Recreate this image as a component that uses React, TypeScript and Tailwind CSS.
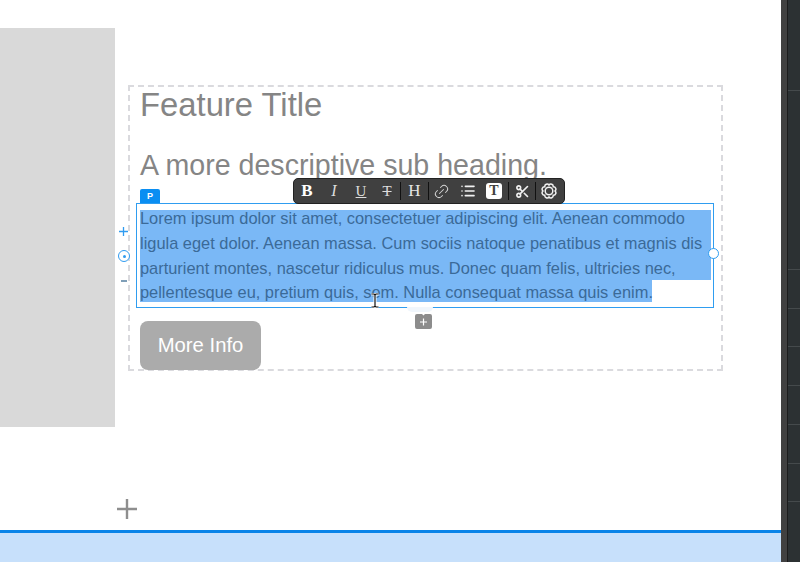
import { Link2, List, Scissors } from 'lucide-react';

const selectedLines = [
  { text: 'Lorem ipsum dolor sit amet, consectetuer adipiscing elit. Aenean commodo', cls: 'h-[21px] w-[571px] leading-[16px]' },
  { text: 'ligula eget dolor. Aenean massa. Cum sociis natoque penatibus et magnis dis', cls: 'h-[25px] w-[571px] leading-[25px]' },
  { text: 'parturient montes, nascetur ridiculus mus. Donec quam felis, ultricies nec,', cls: 'h-[24px] w-[571px] leading-[25px]' },
  { text: 'pellentesque eu, pretium quis, sem. Nulla consequat massa quis enim.', cls: 'h-[22px] w-[512px] leading-[25px]' },
];

const stripRows = [91, 179, 39, 38, 39, 39, 39, 38];

function Sep() {
  return <div className="h-[18px] w-px shrink-0 bg-[#111111]" />;
}

function Cell({ className, children }: { className: string; children: React.ReactNode }) {
  return <div className={`flex shrink-0 items-center justify-center ${className}`}>{children}</div>;
}

function Toolbar() {
  return (
    <div className="absolute left-[156px] top-[-26px] z-10 flex h-[26px] w-[272px] items-center rounded-[5px] border border-[#222222] bg-[#404040] font-['Liberation_Serif',serif] text-[#f2f2f2]">
      <Cell className="w-[26px] text-[17px] font-bold text-white">B</Cell>
      <Cell className="w-[28px] text-[16px] italic text-[#dddddd]">I</Cell>
      <Cell className="w-[26px] text-[15px] text-[#dddddd] underline">U</Cell>
      <Cell className="w-[26px] text-[15px] text-[#dddddd] line-through">T</Cell>
      <Sep />
      <Cell className="w-[27px] text-[17px] text-[#e5e5e5]">H</Cell>
      <Sep />
      <Cell className="w-[25px]"><Link2 size={17} strokeWidth={1.4} className="-rotate-45 text-[#d5d5d5]" /></Cell>
      <Cell className="w-[27px]"><List size={16} strokeWidth={2.4} /></Cell>
      <Cell className="w-[26px]">
        <span className="flex h-[16px] w-[16px] items-center justify-center rounded-[3px] bg-white text-[14px] font-bold leading-none text-[#404040]">T</span>
      </Cell>
      <div className="ml-[1px]"><Sep /></div>
      <Cell className="w-[26px]"><Scissors size={15} strokeWidth={2.6} /></Cell>
      <Sep />
      <Cell className="w-[26px]">
        <svg width="16" height="16" viewBox="0 0 16 16" fill="none" stroke="currentColor" strokeWidth="1.5">
          <circle cx="8" cy="8" r="3.8" />
          <path d="M14 8 A2.4 2.4 0 0 1 12.24 12.24 A2.4 2.4 0 0 1 8 14 A2.4 2.4 0 0 1 3.76 12.24 A2.4 2.4 0 0 1 2 8 A2.4 2.4 0 0 1 3.76 3.76 A2.4 2.4 0 0 1 8 2 A2.4 2.4 0 0 1 12.24 3.76 A2.4 2.4 0 0 1 14 8 Z" />
        </svg>
      </Cell>
    </div>
  );
}

function TextBlock() {
  return (
    <div className="relative ml-[6px] mt-[20px] h-[105px] w-[578px] border border-transparent pl-[3px] pt-[6px] outline-1 -outline-offset-1 outline-[#2f9df0]">
      <div className="absolute left-[3px] top-[-15px] flex h-[14px] w-[20px] items-center justify-center rounded-t-[2px] bg-[#0a8ef2] text-[9px] font-bold leading-none text-white">P</div>
      <Toolbar />

      {selectedLines.map((line) => (
        <div key={line.text} className={`whitespace-nowrap bg-[#7ab8f6] text-[16.4px] text-[#3b6a98] ${line.cls}`}>
          {line.text}
        </div>
      ))}

      {/* resize handle */}
      <div className="absolute right-[-6px] top-[44px] h-[11px] w-[11px] rounded-full border-[1.5px] border-[#2f9df0] bg-white" />

      {/* spacing controls */}
      <svg width="9" height="9" viewBox="0 0 9 9" className="absolute left-[-18px] top-[23px]">
        <path d="M4.5 0 V9 M0 4.5 H9" stroke="#2f9bf0" strokeWidth="1.3" />
      </svg>
      <div className="absolute left-[-19px] top-[46px] flex h-[12px] w-[12px] items-center justify-center rounded-full border-[1.5px] border-[#2f9bf0] bg-white">
        <div className="h-[3px] w-[3px] rounded-full bg-[#2f9bf0]" />
      </div>
      <div className="absolute left-[-16px] top-[76px] h-[1.5px] w-[6px] bg-[#7f9fb8]" />

      {/* add block tab */}
      <div className="absolute left-[270px] top-[103px] h-[5px] w-[26px] rounded-b-md bg-[#f0f6fc]" />
      <svg width="17" height="16" viewBox="0 0 17 16" className="absolute left-[278px] top-[109px]">
        <path d="M0 3 Q0 1 2 1 H7 L8.5 2.5 L10 1 H15 Q17 1 17 3 V14 Q17 16 15 16 H2 Q0 16 0 14 Z" fill="#8c8c8c" />
        <path d="M8.5 5.5 V12.5 M5 9 H12" stroke="#ffffff" strokeWidth="1.2" />
      </svg>

      {/* text cursor */}
      <svg width="10" height="15" viewBox="0 0 10 15" fill="none" className="absolute left-[233px] top-[89px]">
        <path d="M1.5 1 H4 L5 2 L6 1 H8.5 M5 2 V13 M1.5 14 H4 L5 13 L6 14 H8.5" stroke="#ffffff" strokeWidth="3" />
        <path d="M1.5 1 H4 L5 2 L6 1 H8.5 M5 2 V13 M1.5 14 H4 L5 13 L6 14 H8.5" stroke="#111111" strokeWidth="1.2" />
      </svg>
    </div>
  );
}

export default function App() {
  return (
    <div className="flex h-[562px] w-[800px] overflow-hidden bg-white font-['Liberation_Sans',sans-serif]">
      <div className="flex w-[781px] flex-col">
        <div className="flex h-[530px] pt-[28px]">
          <div className="h-[399px] w-[115px] bg-[#d9d9d9]" />
          <div className="relative flex-1 pl-[13px] pt-[57px]">
            <div className="h-[286px] w-[595px] border-2 border-dashed border-[#dadade]">
              <h1 className="pl-[10px] text-[32.8px] leading-[36px] text-[#858585]">Feature Title</h1>
              <h2 className="mt-[24px] pl-[10px] text-[28.6px] leading-[36px] text-[#858585]">A more descriptive sub heading.</h2>
              <TextBlock />
              <button className="ml-[10px] mt-[13px] h-[49px] w-[121px] rounded-[8px] bg-[#ababab] text-[20.3px] text-white">More Info</button>
            </div>
            <svg width="22" height="22" viewBox="0 0 22 22" className="absolute left-[1px] top-[470px]">
              <path d="M11 1 V21 M1 11 H21" stroke="#8e8e8e" strokeWidth="2.4" />
            </svg>
          </div>
        </div>
        <div className="h-[32px] border-t-[3px] border-[#0a84e8] bg-[#c7e0fb]" />
      </div>

      <div className="flex w-[19px]">
        <div className="w-[6px] bg-[#414141]" />
        <div className="w-px bg-[#1c1c1c]" />
        <div className="flex-1 bg-[#2c3133]">
          {stripRows.map((h, i) => (
            <div key={i} style={{ height: h }} className="border-b border-[#454a4c]" />
          ))}
        </div>
      </div>
    </div>
  );
}
